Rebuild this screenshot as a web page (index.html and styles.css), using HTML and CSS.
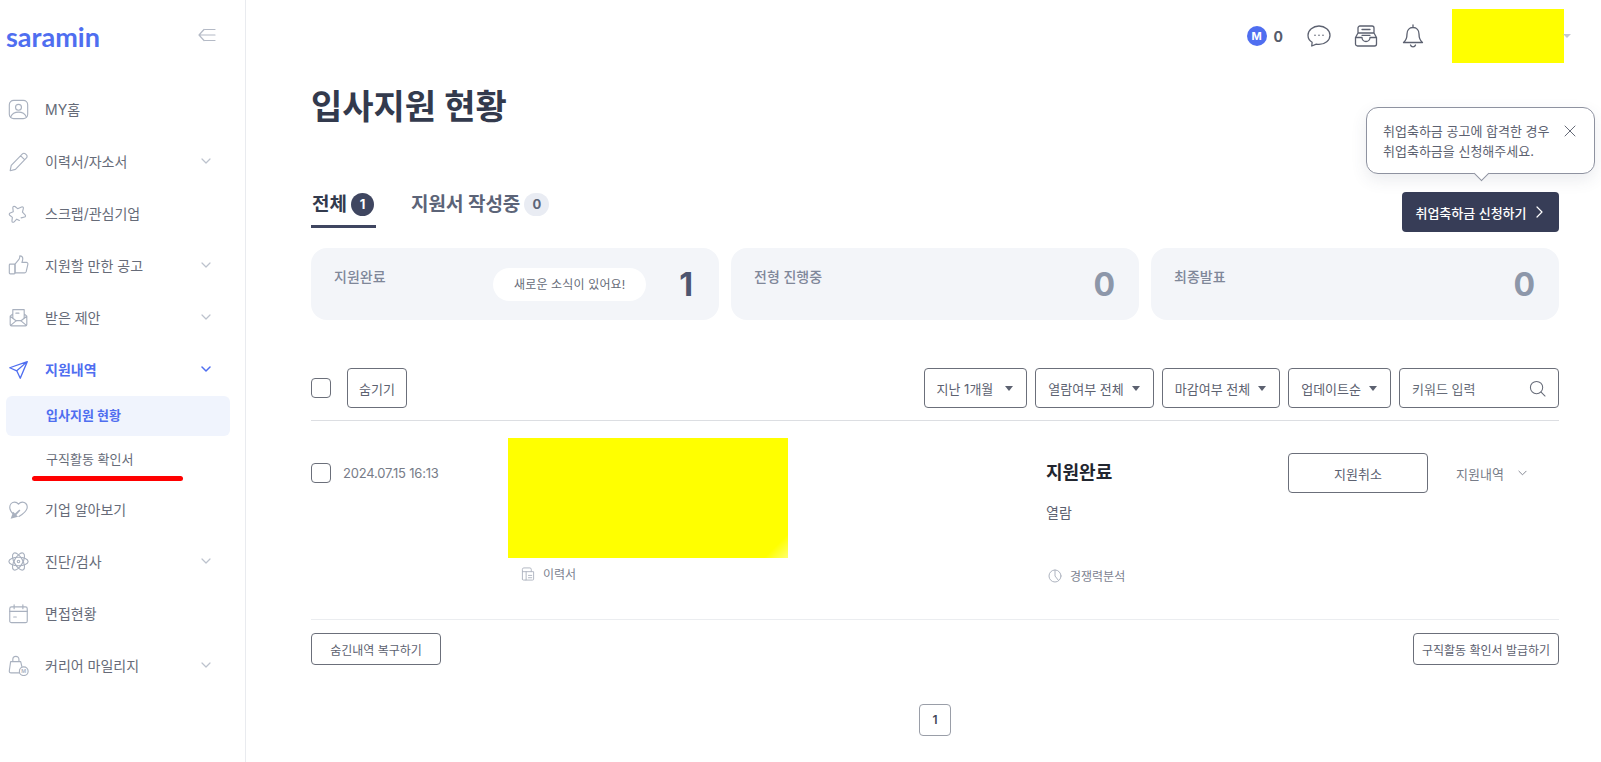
FILE: index.html
```html
<!DOCTYPE html>
<html lang="ko">
<head>
    <meta charset="UTF-8">
    <title>입사지원 현황 - saramin</title>
    <link rel="stylesheet" href="styles.css">
</head>
<body>
    <div class="layout">
        <aside class="sidebar">
            <div class="logo-row">
                <a href="#" class="logo">saramin</a>
                <svg class="collapse-icon" viewBox="0 0 18 14" width="18" height="14"><path d="M6 1.500L1 7l5 5.500M1 7h16M7 1.500h10M7 12.500h10"/></svg>
            </div>

            <ul class="nav">
                <li class="nav-item">
                    <svg class="nav-icon" viewBox="0 0 24 24"><rect x="1.500" y="1.500" width="21" height="21" rx="5"/><circle cx="12" cy="9.500" r="3.400"/><path d="M3 20.500c1.500-3.500 5-5.500 9-5.500s7.500 2 9 5.500"/></svg>
                    <span>MY홈</span>
                </li>
                <li class="nav-item has-sub">
                    <svg class="nav-icon" viewBox="0 0 24 24"><path d="M2.500 22.500l1.200-6L16.500 3.300a2.400 2.400 0 0 1 3.400 0l1.200 1.200a2.400 2.400 0 0 1 0 3.400L8.500 21zM14.500 5.500l4.400 4.400"/></svg>
                    <span>이력서/자소서</span>
                    <svg class="chevron" viewBox="0 0 10 6"><path d="M1 1l4 4 4-4"/></svg>
                </li>
                <li class="nav-item">
                    <svg class="nav-icon" viewBox="0 0 24 24"><path d="M13 20l-3-1.500-3 3c-1 1-2.500.5-2.500-1l.5-4-3-2.500c-1-1-.5-2 .5-2.500l3.500-1.500-.5-4.500c0-1.500 1-2 2.500-1.500l3 2.500 4.500-2c1.500-.5 2.500.5 2 2l-1 4 3 3c1 1 .5 2.500-.5 2.500l-4 1"/></svg>
                    <span>스크랩/관심기업</span>
                </li>
                <li class="nav-item has-sub">
                    <svg class="nav-icon" viewBox="0 0 24 24"><path d="M8 10.500l4.500-5.500c.8-1 1-2.200 1-4 2.200 0 3.400 1.400 3.400 3.400 0 1.400-.5 2.800-1 4.100H21c1.200 0 2 1 1.700 2.200l-1.900 8.300c-.3 1-1 1.500-2 1.500H8z"/><rect x="1.500" y="10.500" width="6.500" height="11" rx="1"/></svg>
                    <span>지원할 만한 공고</span>
                    <svg class="chevron" viewBox="0 0 10 6"><path d="M1 1l4 4 4-4"/></svg>
                </li>
                <li class="nav-item has-sub">
                    <svg class="nav-icon" viewBox="0 0 24 24"><path d="M2.500 10.500V20A1.500 1.500 0 0 0 4 21.500h16a1.500 1.500 0 0 0 1.500-1.500v-9.500M5.500 13V3h13v10M2.500 10.500l3-2.500M21.500 10.500l-3-2.500M2.500 10.500l7 5.500M21.500 10.500l-7 5.500M3 21l6.500-5.500h5L21 21M9 7h3.500"/></svg>
                    <span>받은 제안</span>
                    <svg class="chevron" viewBox="0 0 10 6"><path d="M1 1l4 4 4-4"/></svg>
                </li>
                <li class="nav-item has-sub active">
                    <svg class="nav-icon" viewBox="0 0 24 24"><path d="M22 3L2 10l8 3.500L14 22zM22 3L10 13.500"/></svg>
                    <span>지원내역</span>
                    <svg class="chevron" viewBox="0 0 10 6"><path d="M1 1l4 4 4-4"/></svg>
                </li>
                <li>
                    <ul class="sub-nav">
                        <li class="sub-item current">입사지원 현황</li>
                        <li class="sub-item">구직활동 확인서<i class="red-mark"></i></li>
                    </ul>
                </li>
                <li class="nav-item">
                    <svg class="nav-icon" viewBox="0 0 24 24"><path d="M6.500 17.500C4 15.500 2 13 2 9.500 2 6 4.500 3.500 7.500 3.500c2 0 3.500 1 4.500 2.500 1-1.500 2.500-2.500 4.500-2.500 3 0 5.500 2.500 5.500 5.500 0 4.500-4.500 8-9.500 11"/><path class="solid" d="M3 22.500l3-8 2 2 5-4.500 1.200 1.200-4.700 5 2 2z"/></svg>
                    <span>기업 알아보기</span>
                </li>
                <li class="nav-item has-sub">
                    <svg class="nav-icon atom" viewBox="0 0 24 24"><ellipse cx="12" cy="12" rx="11" ry="4.800"/><ellipse cx="12" cy="12" rx="11" ry="4.800" transform="rotate(60 12 12)"/><ellipse cx="12" cy="12" rx="11" ry="4.800" transform="rotate(120 12 12)"/><circle cx="12" cy="12" r="1.400"/></svg>
                    <span>진단/검사</span>
                    <svg class="chevron" viewBox="0 0 10 6"><path d="M1 1l4 4 4-4"/></svg>
                </li>
                <li class="nav-item">
                    <svg class="nav-icon" viewBox="0 0 24 24"><rect x="2" y="4.500" width="20" height="18" rx="2"/><path d="M2 9.500h20M7 2v4.500M17 2v4.500M6.500 16h3"/></svg>
                    <span>면접현황</span>
                </li>
                <li class="nav-item has-sub">
                    <svg class="nav-icon" viewBox="0 0 24 24"><path d="M13 20.500H3.500C2 20.500 1.300 19.500 1.500 18L3 7.500h11.500l1.300 5.500M5.500 7.500V5a3.500 3.500 0 0 1 7 0v2.500"/><circle cx="18" cy="18.500" r="5"/><text x="18" y="20.700" class="mini-m">M</text></svg>
                    <span>커리어 마일리지</span>
                    <svg class="chevron" viewBox="0 0 10 6"><path d="M1 1l4 4 4-4"/></svg>
                </li>
            </ul>
        </aside>

        <main class="content">
            <header class="top-bar">
                <span class="point-badge">M</span>
                <b class="point-count">0</b>
                <svg class="top-icon first" viewBox="0 0 24 24"><path d="M12 2c-6 0-11 4-11 9.200 0 3 1.600 5.500 4.100 7.100L4.800 22l4.500-1.900c.9.200 1.800.3 2.700.3 6 0 11-4 11-9.200S18 2 12 2z"/><path class="dots" d="M8 11.300h.01M12 11.300h.01M16 11.300h.01"/></svg>
                <svg class="top-icon" viewBox="0 0 24 24"><path d="M1.500 13.500L4 9V4a2 2 0 0 1 2-2h12a2 2 0 0 1 2 2v5l2.500 4.500V20a2 2 0 0 1-2 2h-17a2 2 0 0 1-2-2zM1.500 13.500H8a4 4 0 0 0 8 0h6.500M4 9h16M8 5.500h8M8 11.300h8"/></svg>
                <svg class="top-icon bell" viewBox="0 0 24 24"><path d="M12 1v2.500M12 3.500c-3.800 0-6 2.800-6 6.500 0 4.500-1 6.500-3.500 8.500h19C19 16.500 18 14.500 18 10c0-3.700-2.200-6.500-6-6.500zM9.500 21a2.600 2.600 0 0 0 5 0"/></svg>
                <div class="user-block"></div>
                <i class="user-caret"></i>
            </header>

            <h1 class="page-title">입사지원 현황</h1>

            <div class="tab-row">
                <div class="tabs">
                    <a href="#" class="tab selected">전체<span class="tab-count">1</span></a>
                    <a href="#" class="tab">지원서 작성중<span class="tab-count">0</span></a>
                </div>
                <div class="cta-wrap">
                    <div class="tooltip">
                        <p>취업축하금 공고에 합격한 경우<br>취업축하금을 신청해주세요.</p>
                        <svg class="tooltip-close" viewBox="0 0 12 12"><path d="M1 1l10 10M11 1L1 11"/></svg>
                    </div>
                    <a href="#" class="cta">취업축하금 신청하기<svg viewBox="0 0 7 12"><path d="M1 1l5 5-5 5"/></svg></a>
                </div>
            </div>

            <section class="stats">
                <div class="stat-card">
                    <span class="stat-label">지원완료</span>
                    <span class="stat-pill">새로운 소식이 있어요!</span>
                    <strong class="stat-num on">1</strong>
                </div>
                <div class="stat-card">
                    <span class="stat-label">전형 진행중</span>
                    <strong class="stat-num">0</strong>
                </div>
                <div class="stat-card">
                    <span class="stat-label">최종발표</span>
                    <strong class="stat-num">0</strong>
                </div>
            </section>

            <div class="toolbar">
                <span class="checkbox"></span>
                <button class="btn hide-btn">숨기기</button>
                <div class="filters">
                    <div class="select period">지난 1개월<i></i></div>
                    <div class="select">열람여부 전체<i></i></div>
                    <div class="select">마감여부 전체<i></i></div>
                    <div class="select">업데이트순<i></i></div>
                    <div class="search">
                        <span>키워드 입력</span>
                        <svg viewBox="0 0 18 18"><circle cx="8" cy="8" r="6.500"/><path d="M12.800 12.800L17 17"/></svg>
                    </div>
                </div>
            </div>

            <article class="apply-row">
                <div class="apply-date">
                    <span class="checkbox"></span>
                    <span>2024.07.15 16:13</span>
                </div>
                <div class="apply-job">
                    <div class="job-block"></div>
                    <a href="#" class="small-link resume-link">
                        <svg viewBox="0 0 14 15"><path d="M1 13V2.500A1.500 1.500 0 0 1 2.500 1H9a1.500 1.500 0 0 1 1.500 1.500V5H1M5 5v9H2a1 1 0 0 1-1-1M5 14h7a1 1 0 0 0 1-1V5h-2.500M7.500 9h3.500M7.500 11.500h3.500"/></svg>
                        이력서
                    </a>
                </div>
                <div class="apply-status">
                    <strong>지원완료</strong>
                    <p>열람</p>
                    <a href="#" class="small-link">
                        <svg viewBox="0 0 14 14"><circle cx="7" cy="7" r="6"/><path d="M7 1v6l3.500 4.500"/></svg>
                        경쟁력분석
                    </a>
                </div>
                <div class="apply-actions">
                    <button class="btn cancel-btn">지원취소</button>
                    <a href="#" class="detail-link">지원내역<svg viewBox="0 0 10 6"><path d="M1 1l4 4 4-4"/></svg></a>
                </div>
            </article>

            <div class="bottom-actions">
                <button class="btn wide-btn">숨긴내역 복구하기</button>
                <button class="btn issue-btn">구직활동 확인서 발급하기</button>
            </div>

            <nav class="pagination">
                <a href="#" class="page-num">1</a>
            </nav>
        </main>
    </div>
</body>
</html>
```

FILE: styles.css
```css
:root {
    --blue: #4f6ef0;
    --navy: #373d57;
    --line: #6b6f7a;
    --icon: #a9b1bf;
}

* {
    margin: 0;
    padding: 0;
    box-sizing: border-box;
}

body {
    font-family: Inter, 'Noto Sans CJK KR', sans-serif;
    color: #5c6170;
    background: #fff;
    overflow: hidden;
}

a {
    color: inherit;
    text-decoration: none;
}

ul {
    list-style: none;
}

svg {
    fill: none;
    stroke: currentColor;
    stroke-linecap: round;
    stroke-linejoin: round;
}

button {
    font-family: inherit;
    background: #fff;
    cursor: pointer;
}

.layout {
    display: flex;
    height: 762px;
}

/* sidebar */
.sidebar {
    width: 246px;
    flex-shrink: 0;
    border-right: 1px solid #e9ebef;
}

.logo-row {
    height: 83px;
    padding: 20px 0 0 6px;
    display: flex;
    align-items: flex-start;
}

.logo {
    font-family: Lato, sans-serif;
    font-size: 27px;
    font-weight: 700;
    line-height: 34px;
    color: var(--blue);
}

.collapse-icon {
    margin: 8px 0 0 98px;
    color: #b4bac6;
    stroke-width: 1.2;
}

.nav-item {
    height: 52px;
    padding: 0 34px 0 8px;
    display: flex;
    align-items: center;
    font-size: 14px;
    color: #666b78;
}

.nav-icon {
    width: 21px;
    height: 21px;
    margin-right: 16px;
    color: var(--icon);
    stroke-width: 1.3;
    flex-shrink: 0;
}

.nav-icon .solid {
    fill: var(--icon);
    stroke: none;
}

.mini-m {
    font-family: Inter, sans-serif;
    font-size: 6px;
    font-weight: 600;
    text-anchor: middle;
    fill: var(--icon);
    stroke: none;
}

.chevron {
    width: 10px;
    height: 6px;
    margin-left: auto;
    color: #bcc2cd;
    stroke-width: 1.2;
}

.nav-item.active {
    color: var(--blue);
    font-weight: 700;
}

.nav-item.active .nav-icon {
    color: var(--blue);
    stroke-width: 1.5;
}

.nav-item.active .chevron {
    color: var(--blue);
    stroke-width: 1.5;
}

.sub-nav {
    padding: 1px 15px 3px 6px;
    display: flex;
    flex-direction: column;
    gap: 4px;
}

.sub-item {
    position: relative;
    height: 40px;
    padding: 0 0 3px 40px;
    display: flex;
    align-items: center;
    font-size: 13px;
    border-radius: 6px;
    color: #666b78;
}

.sub-item.current {
    background: #f0f4fd;
    color: var(--blue);
    font-weight: 700;
}

.red-mark {
    position: absolute;
    left: 26px;
    top: 36px;
    width: 151px;
    height: 5px;
    border-radius: 3px;
    background: #ff0000;
}

/* main */
.content {
    flex: 1;
    padding: 9px 42px 0 65px;
}

.top-bar {
    height: 54px;
    display: flex;
    align-items: center;
    justify-content: flex-end;
    position: relative;
    padding-right: 37px;
    margin-right: -42px;
}

.point-badge {
    width: 20px;
    height: 20px;
    border-radius: 50%;
    background: var(--blue);
    color: #fff;
    font-size: 11px;
    font-weight: 700;
    display: flex;
    align-items: center;
    justify-content: center;
}

.point-count {
    margin-left: 7px;
    font-size: 14px;
    color: #565b6b;
}

.top-icon {
    width: 24px;
    height: 24px;
    margin-left: 23px;
    color: #5c6170;
    stroke-width: 1.3;
}

.top-icon.first {
    margin-left: 24px;
}

.top-icon .dots {
    stroke-width: 1.6;
}

.user-block {
    width: 112px;
    height: 54px;
    margin-left: 27px;
    background: #ffff00;
}

.user-caret {
    position: absolute;
    right: 30px;
    top: 25px;
    border: 4px solid transparent;
    border-top: 4px solid #c4c8d0;
}

.page-title {
    margin-top: 19px;
    font-size: 34px;
    line-height: 50px;
    font-weight: 700;
    color: #333a4d;
}

.tab-row {
    margin-top: 60px;
    height: 40px;
    display: flex;
    justify-content: space-between;
    align-items: flex-start;
}

.tabs {
    display: flex;
    gap: 34px;
}

.tab {
    height: 36px;
    padding: 0 2px 0 1px;
    display: flex;
    align-items: flex-start;
    gap: 4px;
    font-size: 19px;
    line-height: 26px;
    font-weight: 700;
    color: #5c6478;
    border-bottom: 3px solid transparent;
}

.tab.selected {
    color: #333a4d;
    border-bottom-color: #3f4660;
}

.tab-count {
    width: 25px;
    height: 23px;
    border-radius: 12px;
    background: #e9ecf3;
    color: #5c6478;
    font-size: 13px;
    line-height: 23px;
    text-align: center;
    margin-top: 1px;
}

.selected .tab-count {
    width: 23px;
    background: #3f4660;
    color: #fff;
}

.cta-wrap {
    position: relative;
}

.cta {
    height: 40px;
    width: 157px;
    padding-right: 3px;
    border-radius: 4px;
    background: var(--navy);
    color: #fff;
    font-size: 13px;
    font-weight: 500;
    display: flex;
    align-items: center;
    justify-content: center;
    gap: 9px;
}

.cta svg {
    width: 7px;
    height: 12px;
    stroke-width: 1.2;
}

.tooltip {
    position: absolute;
    right: -36px;
    bottom: 58px;
    width: 229px;
    height: 67px;
    padding: 13px 0 0 16px;
    border: 1px solid #8e92a0;
    border-radius: 12px;
    background: #fff;
    box-shadow: 0 6px 16px rgba(60, 70, 100, 0.1);
    font-size: 13px;
    line-height: 20px;
    color: #5c6170;
    white-space: nowrap;
}

.tooltip::after {
    content: '';
    position: absolute;
    left: 109px;
    bottom: -6px;
    width: 10px;
    height: 10px;
    background: #fff;
    border-right: 1px solid #8e92a0;
    border-bottom: 1px solid #8e92a0;
    transform: rotate(45deg);
}

.tooltip-close {
    position: absolute;
    right: 18px;
    top: 17px;
    width: 12px;
    height: 12px;
    stroke-width: 1;
    color: #666b78;
}

.stats {
    margin-top: 16px;
    display: grid;
    grid-template-columns: repeat(3, 1fr);
    gap: 12px;
}

.stat-card {
    height: 72px;
    padding: 0 24px 0 23px;
    display: flex;
    align-items: center;
    background: #f3f5f9;
    border-radius: 16px;
}

.stat-label {
    align-self: flex-start;
    margin-top: 19px;
    font-size: 14px;
    line-height: 20px;
    font-weight: 500;
    color: #7f8799;
}

.stat-pill {
    margin-left: auto;
    width: 153px;
    height: 33px;
    border-radius: 17px;
    background: #fff;
    font-size: 12px;
    letter-spacing: 0.15px;
    line-height: 33px;
    text-align: center;
    color: #666b78;
}

.stat-num {
    margin-left: auto;
    font-size: 32px;
    font-weight: 700;
    color: #8d97aa;
}

.stat-pill + .stat-num {
    margin-left: 33px;
}

.stat-num.on {
    margin-right: 2px;
    color: #4d5670;
}

.toolbar {
    margin-top: 48px;
    padding-bottom: 12px;
    border-bottom: 1px solid #dcdee2;
    display: flex;
    align-items: center;
}

.checkbox {
    display: block;
    width: 20px;
    height: 20px;
    flex-shrink: 0;
    border: 1px solid var(--line);
    border-radius: 4px;
    background: #fff;
}

.btn {
    border: 1px solid var(--line);
    border-radius: 4px;
    font-size: 12px;
    color: #5c6170;
}

.hide-btn {
    margin-left: 16px;
    width: 60px;
    height: 40px;
    font-size: 13px;
}

.filters {
    margin-left: auto;
    display: flex;
    gap: 8px;
}

.select,
.search {
    height: 40px;
    padding: 0 13px 0 12px;
    display: flex;
    align-items: center;
    justify-content: space-between;
    border: 1px solid var(--line);
    border-radius: 4px;
    font-size: 13px;
    color: #5c6170;
    white-space: nowrap;
}

.select {
    gap: 8px;
}

.select.period {
    gap: 12px;
}

.select i {
    border: 4px solid transparent;
    border-top: 5px solid #5c6170;
    border-bottom: 0;
}

.search {
    width: 160px;
    padding-right: 12px;
    color: #666b78;
}

.search svg {
    width: 17px;
    height: 17px;
    stroke-width: 1.1;
}

.apply-row {
    display: grid;
    grid-template-columns: 197px 538px 242px 1fr;
    height: 199px;
    padding-top: 17px;
    border-bottom: 1px solid #ebedf0;
}

.apply-date {
    padding-top: 25px;
    display: flex;
    gap: 12px;
    font-size: 13px;
    letter-spacing: -0.2px;
    line-height: 20px;
    color: #777c88;
}

.job-block {
    width: 280px;
    height: 120px;
    background: linear-gradient(135deg, #ffff00 94%, #ffff70);
}

.small-link {
    display: flex;
    align-items: center;
    gap: 8px;
    font-size: 12px;
    color: #7c8290;
}

.small-link svg {
    width: 14px;
    height: 14px;
    color: #aeb4c0;
    stroke-width: 1;
}

.resume-link {
    margin: 7px 0 0 13px;
}

.apply-status strong {
    display: block;
    margin-top: 21px;
    font-size: 18px;
    line-height: 28px;
    font-weight: 700;
    color: #22262f;
}

.apply-status p {
    margin-top: 16px;
    font-size: 14px;
    line-height: 20px;
    color: #5c6170;
}

.apply-status .small-link {
    margin: 44px 0 0 2px;
}

.apply-actions {
    padding-top: 15px;
    display: flex;
    align-items: flex-start;
}

.cancel-btn {
    width: 140px;
    height: 40px;
    font-size: 13px;
}

.detail-link {
    margin-left: 28px;
    height: 40px;
    display: flex;
    align-items: center;
    gap: 14px;
    font-size: 13px;
    color: #777c88;
}

.detail-link svg {
    width: 9px;
    height: 6px;
    stroke-width: 1;
}

.bottom-actions {
    margin-top: 13px;
    display: flex;
    justify-content: space-between;
}

.wide-btn {
    width: 130px;
    height: 32px;
}

.issue-btn {
    width: 146px;
    height: 32px;
}

.pagination {
    margin-top: 39px;
    display: flex;
    justify-content: center;
}

.page-num {
    width: 32px;
    height: 32px;
    border: 1px solid #9a9ea8;
    border-radius: 4px;
    font-size: 12px;
    font-weight: 600;
    line-height: 30px;
    text-align: center;
    color: #444a58;
}
```
